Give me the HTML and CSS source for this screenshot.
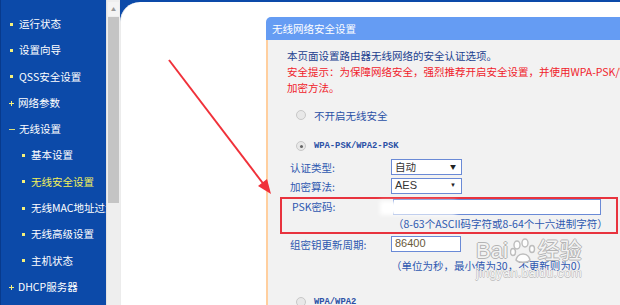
FILE: index.html
```html
<!DOCTYPE html>
<html lang="zh-CN">
<head>
    <meta charset="UTF-8">
    <title>无线网络安全设置</title>
    <link rel="stylesheet" href="styles.css">
</head>
<body>
    <div class="frame">
        <nav class="side">
            <ul class="menu">
                <li><span class="dot"></span>运行状态</li>
                <li><span class="dot"></span>设置向导</li>
                <li><span class="dot"></span>QSS安全设置</li>
                <li><span class="dot plus"></span>网络参数</li>
                <li><span class="dot dash"></span>无线设置</li>
                <li class="sub"><span class="dot"></span>基本设置</li>
                <li class="sub active"><span class="dot"></span>无线安全设置</li>
                <li class="sub"><span class="dot"></span>无线MAC地址过滤</li>
                <li class="sub"><span class="dot"></span>无线高级设置</li>
                <li class="sub"><span class="dot"></span>主机状态</li>
                <li><span class="dot plus"></span>DHCP服务器</li>
            </ul>
        </nav>

        <div class="scroll">
            <div class="scroll-up">▲</div>
            <div class="scroll-thumb"></div>
        </div>

        <main class="main">
            <div class="page">
                <section class="panel">
                    <h2 class="panel-title">无线网络安全设置</h2>
                    <div class="panel-body">
                        <div class="intro">
                            <p class="note">本页面设置路由器无线网络的安全认证选项。</p>
                            <p class="warn">安全提示：为保障网络安全，强烈推荐开启安全设置，并使用WPA-PSK/WPA2-PSK AES<br>加密方法。</p>
                        </div>

                        <div class="radio-row first">
                            <span class="radio"></span>
                            <span class="radio-label">不开启无线安全</span>
                        </div>

                        <div class="radio-row second">
                            <span class="radio checked"></span>
                            <span class="radio-label mono">WPA-PSK/WPA2-PSK</span>
                        </div>

                        <div class="field">
                            <label class="field-label">认证类型:</label>
                            <div class="select">自动<span class="caret">▼</span></div>
                        </div>
                        <div class="field">
                            <label class="field-label">加密算法:</label>
                            <div class="select latin">AES<span class="caret">▼</span></div>
                        </div>

                        <div class="mark">
                            <div class="field psk">
                                <label class="field-label">PSK密码:</label>
                                <div class="input wide"></div>
                            </div>
                            <p class="hint">（8-63个ASCII码字符或8-64个十六进制字符）</p>
                        </div>

                        <div class="field period">
                            <label class="field-label">组密钥更新周期:</label>
                            <div class="input short">86400</div>
                        </div>
                        <p class="hint second-hint">（单位为秒，最小值为30，不更新则为0）</p>

                        <div class="radio-row third">
                            <span class="radio"></span>
                            <span class="radio-label mono">WPA/WPA2</span>
                        </div>
                    </div>
                </section>
            </div>
        </main>
    </div>

    <!-- annotations drawn over the screenshot -->
    <svg class="arrow" width="620" height="305" viewBox="0 0 620 305">
        <line x1="169" y1="60" x2="265" y2="186" stroke="#f0313a" stroke-width="2"/>
        <polygon points="271,194 258,186 267,179" fill="#f0313a"/>
    </svg>

    <div class="watermark">
        <div class="wm-logo">Bai<span class="paw">
            <svg width="26" height="26" viewBox="0 0 26 26">
                <g fill="rgba(255,255,255,0.8)" stroke="#bdbdbd" stroke-width="1.4">
                    <ellipse cx="7" cy="7" rx="3" ry="4"/>
                    <ellipse cx="15" cy="5" rx="3" ry="4"/>
                    <ellipse cx="22" cy="11" rx="2.5" ry="3.5"/>
                    <ellipse cx="3" cy="14" rx="2.5" ry="3.5"/>
                    <path d="M6 22 C8 14, 18 14, 20 22 C18 25, 8 25, 6 22 Z"/>
                </g>
            </svg></span>经验</div>
        <div class="wm-url">jingyan.baidu.com</div>
    </div>
</body>
</html>
```

FILE: styles.css
```css
body {
    margin: 0;
    width: 620px;
    height: 305px;
    overflow: hidden;
    position: relative;
    font-family: "Noto Sans CJK SC", "Noto Sans", sans-serif;
    font-size: 10.5px;
    background: #ffffff;
}
p {
    margin: 0;
}
.frame {
    display: flex;
    height: 305px;
}

/* menu gauche */
.side {
    width: 106px;
    flex: none;
    background: #0c4aa9;
    border-left: 1px solid #083a8c;
    box-sizing: border-box;
    overflow: hidden;
}
.menu {
    list-style: none;
    margin: 0;
    padding: 11px 0 0 0;
}
.menu li {
    height: 26.3px;
    line-height: 26.3px;
    color: #ffffff;
    white-space: nowrap;
    display: flex;
    align-items: center;
    padding-left: 9px;
}
.menu li.sub {
    padding-left: 21px;
}
.menu li.active {
    color: #f2f05a;
}
.dot {
    width: 3px;
    height: 3px;
    background: #f5f07a;
    margin-right: 6px;
    flex: none;
}
.dot.plus {
    width: 5px;
    height: 5px;
    margin-right: 4px;
    margin-left: -1px;
    background: none;
    position: relative;
}
.dot.plus::before,
.dot.plus::after {
    content: "";
    position: absolute;
    background: #f5f07a;
}
.dot.plus::before {
    left: 0;
    top: 2px;
    width: 5px;
    height: 1px;
}
.dot.plus::after {
    left: 2px;
    top: 0;
    width: 1px;
    height: 5px;
}
.dot.dash {
    width: 6px;
    height: 1.5px;
    margin-left: -1px;
    margin-right: 4px;
    background: #d9e07a;
}

/* barre de defilement */
.scroll {
    width: 14px;
    flex: none;
    background: #eeeeee;
    border-left: 1px solid #e2e2e2;
    box-sizing: border-box;
    padding: 2px 1px 0 1px;
}
.scroll-up {
    height: 14px;
    font-size: 5px;
    line-height: 14px;
    text-align: center;
    color: #9a9a9a;
    background: #f4f4f4;
}
.scroll-thumb {
    height: 186px;
    background: #c4c4c4;
    margin-top: 1px;
}

/* zone principale */
.main {
    flex: 1;
    background: #0c4aa9;
    min-width: 0;
}
.page {
    margin-top: 2px;
    height: 303px;
    background: #ffffff;
    border-top-left-radius: 20px;
    border-left: 1px solid #ececec;
    box-sizing: border-box;
    padding: 15px 0 0 145px;
    overflow: hidden;
}
.panel {
    width: 420px;
}
.panel-title {
    margin: 0;
    height: 23px;
    line-height: 23px;
    padding-left: 6px;
    font-size: 10.5px;
    font-weight: normal;
    color: #ffffff;
    background: #659cf3;
    border-top-left-radius: 5px;
}
.panel-body {
    background: #f2f2f2;
    border-left: 2px solid #ffcf9f;
    padding: 8px 0 0 19px;
    height: 280px;
    box-sizing: border-box;
}
.intro p {
    line-height: 16px;
}
.note {
    color: #223f8f;
}
.warn {
    color: #f0222b;
    white-space: nowrap;
}

.radio-row {
    display: flex;
    align-items: center;
    height: 20px;
}
.radio-row.first {
    margin-top: 9px;
}
.radio-row.second {
    margin-top: 11px;
}
.radio-row.third {
    margin-top: 19px;
}
.radio {
    width: 8px;
    height: 8px;
    border-radius: 50%;
    border: 1px solid #c8c8c8;
    background: #e8e8e8;
    margin-left: 9px;
    margin-right: 8px;
    position: relative;
}
.radio.checked::after {
    content: "";
    position: absolute;
    left: 2.5px;
    top: 2.5px;
    width: 3px;
    height: 3px;
    border-radius: 50%;
    background: #666;
}
.radio-label {
    color: #2a50a6;
}
.radio-label.mono {
    font-family: "Liberation Mono", monospace;
    font-size: 8.8px;
    font-weight: bold;
}

.field {
    display: flex;
    align-items: center;
    height: 19px;
    padding-left: 3px;
}
.radio-row.second + .field {
    margin-top: 1.5px;
}
.field-label {
    width: 101px;
    flex: none;
    color: #2e58b0;
}
.select,
.input {
    height: 16px;
    box-sizing: border-box;
    border: 1.5px solid #6a8ad6;
    background: #ffffff;
    color: #333;
    line-height: 13px;
    padding-left: 3px;
}
.select {
    width: 71px;
    position: relative;
}
.select.latin {
    font-family: "Liberation Sans", sans-serif;
    font-size: 11px;
}
.caret {
    position: absolute;
    right: 5px;
    top: 0;
    font-size: 6px;
    color: #222;
}
.input.wide {
    width: 208px;
    position: relative;
}
.input.wide::before {
    content: "";
    position: absolute;
    left: -14px;
    top: 1px;
    width: 76px;
    height: 14px;
    background: #ffffff;
    filter: blur(2px);
}
.input.short {
    width: 70px;
    font-family: "Liberation Sans", sans-serif;
    font-size: 11px;
    color: #6a5a3a;
}

/* cadre rouge d'annotation */
.mark {
    width: 338px;
    margin-left: -7px;
    margin-top: 1px;
    border: 2px solid #e8333e;
    box-sizing: border-box;
    padding: 0 0 0 7px;
}
.field.psk {
    height: 16px;
}
.hint {
    color: #2e58b0;
    line-height: 15px;
    padding-left: 104px;
    margin-top: 1px;
    white-space: nowrap;
}
.mark .hint {
    padding-bottom: 1px;
}
.field.period {
    margin-top: 2px;
    height: 17px;
}
.hint.second-hint {
    margin-top: 5px;
}

.arrow {
    position: absolute;
    left: 0;
    top: 0;
    pointer-events: none;
}

/* filigrane */
.watermark {
    position: absolute;
    left: 476px;
    top: 238px;
    color: rgba(255, 255, 255, 0.85);
    text-shadow: 1px 0 0 #b4b4b4, -1px 0 0 #b4b4b4, 0 1px 0 #b4b4b4, 0 -1px 0 #b4b4b4;
    pointer-events: none;
}
.wm-logo {
    font-family: "Liberation Sans", "Noto Sans CJK SC", sans-serif;
    font-size: 22px;
    line-height: 26px;
    display: flex;
    align-items: center;
}
.paw {
    display: inline-flex;
    margin: 0 2px;
}
.wm-url {
    font-family: "Liberation Sans", sans-serif;
    font-size: 12.5px;
    letter-spacing: 0.3px;
    margin-top: 2px;
    text-shadow: 0.5px 0 0 #c0c0c0, -0.5px 0 0 #c0c0c0, 0 0.5px 0 #c0c0c0, 0 -0.5px 0 #c0c0c0;
}
```
